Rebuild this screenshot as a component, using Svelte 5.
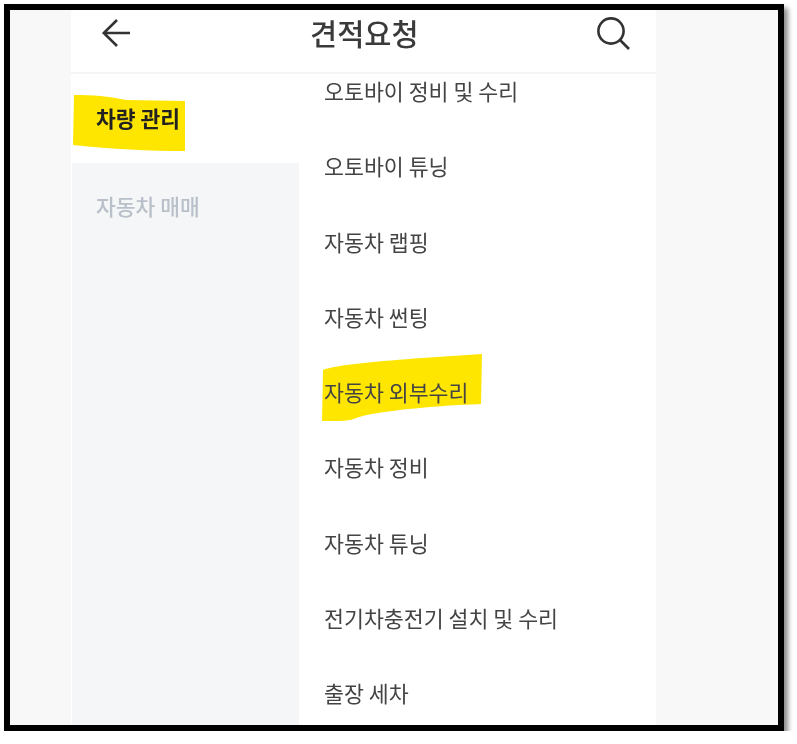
<script>
  const items = [
    '오토바이 정비 및 수리',
    '오토바이 튜닝',
    '자동차 랩핑',
    '자동차 썬팅',
    '자동차 외부수리',
    '자동차 정비',
    '자동차 튜닝',
    '전기차충전기 설치 및 수리',
    '출장 세차'
  ];
</script>

<div class="frame">
  <div class="phone">
    <header class="topbar">
      <svg class="icon back" width="32" height="30" viewBox="0 0 32 30" aria-hidden="true">
        <path d="M29 15H3M16 2 2.8 15 16 28" />
      </svg>
      <h1>견적요청</h1>
      <svg class="icon search" width="34" height="34" viewBox="0 0 34 34" aria-hidden="true">
        <circle cx="14" cy="14" r="12.6" />
        <path d="M23 23 32 32" />
      </svg>
    </header>

    <div class="body">
      <nav class="side">
        <div class="cat active">
          <svg class="mark mark-cat" width="112" height="56" viewBox="0 0 112 56" aria-hidden="true">
            <path d="M1 0 C20 0 35 1 53 5 L112 6 L112 56 C75 56 40 54 0 50 Z" />
          </svg>
          <span>차량 관리</span>
        </div>
        <div class="cat">자동차 매매</div>
      </nav>

      <ul class="list">
        {#each items as item}
          <li class:marked={item === '자동차 외부수리'}>
            {#if item === '자동차 외부수리'}
              <svg class="mark mark-item" width="160" height="68" viewBox="0 0 160 68" aria-hidden="true">
                <path d="M1 16 C12 11 60 7 100 4 L160 0 L159 50 C110 52 70 56 45 61 C35 63 30 67 18 67 L0 67 Z" />
              </svg>
            {/if}
            <span>{item}</span>
          </li>
        {/each}
      </ul>
    </div>
  </div>
</div>

<style>
  :global(body) {
    margin: 0;
    background: #fff;
  }

  .frame {
    width: 780px;
    height: 727px;
    margin: 4px 0 0 4px;
    box-sizing: border-box;
    border: 6px solid #000;
    background: #f8f8f8;
    box-shadow: 4px 4px 5px rgba(0, 0, 0, 0.45);
    font-family: "Noto Sans CJK KR", "Noto Sans", sans-serif;
    overflow: hidden;
  }

  .phone {
    width: 585px;
    height: 100%;
    margin-left: 61px;
    background: #fff;
    display: flex;
    flex-direction: column;
    filter: blur(0.5px);
  }

  .topbar {
    height: 64px;
    box-sizing: border-box;
    flex: none;
    border-bottom: 2px solid #f5f5f6;
    display: flex;
    align-items: flex-start;
    justify-content: space-between;
    padding: 8px 25px 0 30px;
    position: relative;
  }

  .topbar h1 {
    margin: 0;
    font-size: 29.5px;
    font-weight: 500;
    color: #3a3a3a;
    position: absolute;
    left: 239px;
    top: 1px;
    line-height: 42px;
  }

  .icon {
    fill: none;
    stroke: #333;
    stroke-width: 2.6;
  }

  .search {
    margin-top: -1px;
  }

  .body {
    flex: 1;
    display: flex;
    min-height: 0;
  }

  .side {
    width: 227px;
    flex: none;
    margin-left: 1px;
    background: #f4f6f8;
  }

  .cat {
    height: 89px;
    padding-left: 24px;
    display: flex;
    align-items: center;
    font-size: 21.5px;
    font-weight: 500;
    color: #b9c0c9;
    position: relative;
    top: -1px;
  }

  .cat.active {
    background: #fff;
    color: #222;
    font-weight: 700;
    top: 0;
    margin-bottom: -1px;
  }

  .cat span,
  li span {
    position: relative;
  }

  .cat.active span {
    top: -1px;
  }

  .mark {
    position: absolute;
    fill: #ffe600;
  }

  .mark-cat {
    left: 1px;
    top: 21px;
  }

  .mark-item {
    left: 23px;
    top: 0;
  }

  .list {
    flex: 1;
    list-style: none;
    margin: -21px 0 0;
    padding: 0;
  }

  li {
    height: 75.25px;
    padding-left: 25px;
    display: flex;
    align-items: center;
    font-size: 21.7px;
    color: #444;
    position: relative;
    white-space: nowrap;
  }
</style>
